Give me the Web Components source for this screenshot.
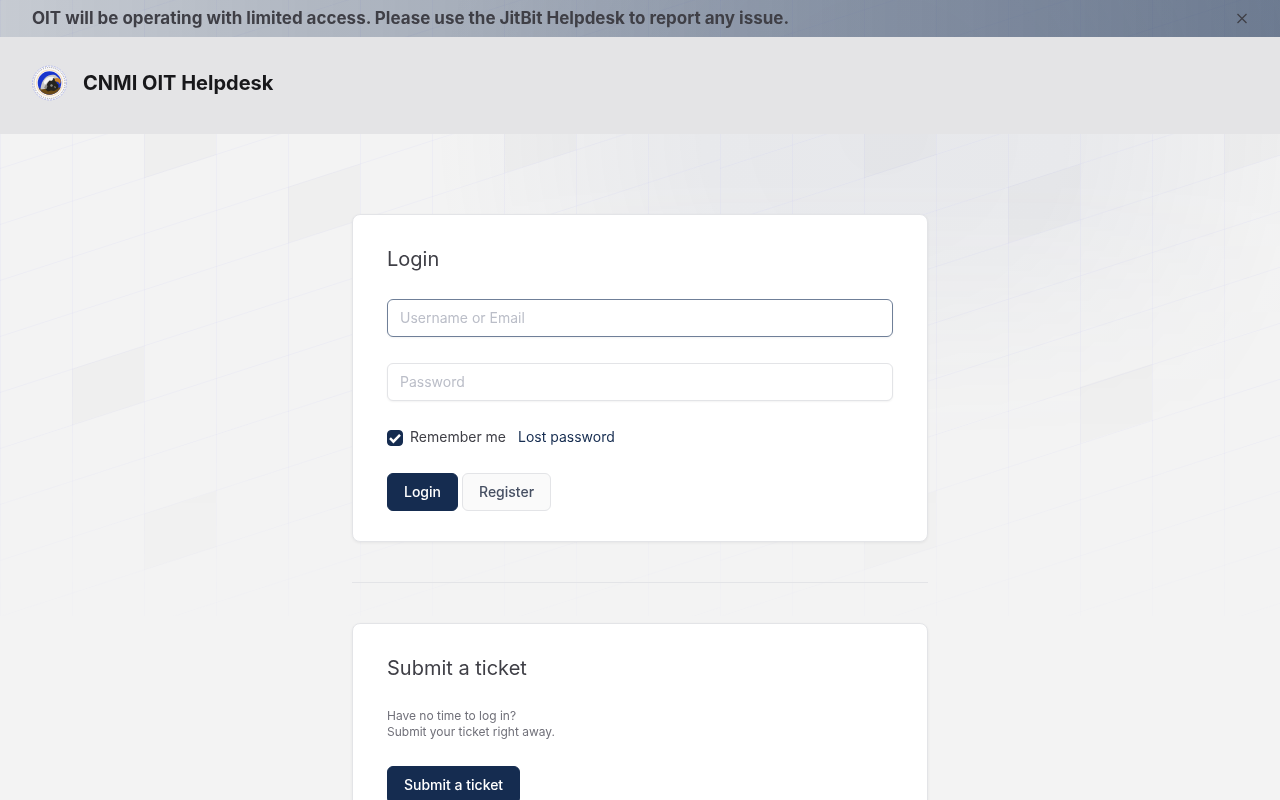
<!DOCTYPE html>
<html lang="en">
<head>
<meta charset="utf-8">
<meta name="viewport" content="width=device-width, initial-scale=1">
<title>CNMI OIT Helpdesk - Login</title>
<style>
  html {
    --navy: #152c50;
    --border: #e3e4e7;
    --text: #3f3f46;
    --muted: #71717a;
    background: #f3f3f3;
  }

  body {
    margin: 0;
    min-height: 100vh;
    color: var(--text);
    font: 14px/20px Inter, "Liberation Sans", sans-serif;
  }

  main {
    box-sizing: border-box;
    max-width: 608px;
    margin: 0 auto;
    padding: 80px 16px;
  }

  hr {
    margin: 40px 0;
    border: 0;
    border-top: 1px solid var(--border);
  }

  form {
    display: flex;
    flex-direction: column;
    gap: 26px;
  }

  .row {
    display: flex;
    align-items: center;
    gap: 12px;
  }

  .buttons {
    display: flex;
    gap: 4px;
  }

  a {
    color: var(--navy);
    text-decoration: none;
  }

  .note {
    margin: 0 0 26px;
    color: var(--muted);
    font-size: 12px;
    line-height: 16px;
  }
</style>
</head>
<body>
<page-backdrop></page-backdrop>
<notice-bar>OIT will be operating with limited access. Please use the JitBit Helpdesk to report any issue.</notice-bar>
<site-header>CNMI OIT Helpdesk</site-header>

<main>
  <panel-card heading="Login">
    <form>
      <text-field name="username" label="Username or Email" active></text-field>
      <text-field name="password" type="password" label="Password"></text-field>
      <div class="row">
        <check-box name="remember" checked>Remember me</check-box>
        <a href="#lost">Lost password</a>
      </div>
      <div class="buttons">
        <action-button primary>Login</action-button>
        <action-button>Register</action-button>
      </div>
    </form>
  </panel-card>
  <hr>
  <panel-card heading="Submit a ticket">
    <p class="note">Have no time to log in?<br>Submit your ticket right away.</p>
    <action-button primary>Submit a ticket</action-button>
  </panel-card>
</main>

<template id="backdrop">
  <style>
    :host {
      display: block;
      position: fixed;
      inset: 0;
      z-index: -1;
      overflow: hidden;
    }
    .glow {
      position: absolute;
      inset: 0;
      background: radial-gradient(circle 450px at 69% 130px, rgba(90, 105, 150, .075), rgba(90, 105, 150, .065) 40%, rgba(90, 105, 150, 0));
      -webkit-mask-image: linear-gradient(#000 180px, transparent 445px);
      mask-image: linear-gradient(#000 180px, transparent 445px);
    }
    svg {
      position: absolute;
      width: 100%;
      height: 700px;
      -webkit-mask-image: linear-gradient(#000 55%, transparent);
      mask-image: linear-gradient(#000 55%, transparent);
    }
  </style>
  <div class="glow"></div>
  <svg aria-hidden="true">
    <defs>
      <pattern id="mesh" width="720" height="616" patternUnits="userSpaceOnUse">
        <g class="cells" fill="#000" fill-opacity=".016"></g>
        <path class="lines" fill="none" stroke="#6464ff" stroke-opacity=".038"/>
      </pattern>
    </defs>
    <rect width="100%" height="616" fill="url(#mesh)"/>
  </svg>
</template>

<template id="notice">
  <style>
    :host {
      display: flex;
      align-items: center;
      justify-content: space-between;
      padding: 6px 32px 7px;
      background: linear-gradient(90deg, rgba(21, 44, 80, .2), rgba(21, 44, 80, .6));
      font-size: 17px;
      font-weight: 700;
      line-height: 24px;
    }
    :host([hidden]) { display: none; }
    button {
      display: flex;
      padding: 0;
      border: 0;
      background: none;
      color: inherit;
      cursor: pointer;
    }
  </style>
  <span><slot></slot></span>
  <button type="button" aria-label="Close">
    <svg width="12" height="12" viewBox="0 0 12 12" fill="none" stroke="currentColor" stroke-width="1.300"><path d="M1.500 2l9 9M10.500 2l-9 9"/></svg>
  </button>
</template>

<template id="header">
  <style>
    :host {
      display: block;
      padding: 28px 32px 33px;
      background: #e4e4e6;
    }
    a {
      display: flex;
      align-items: center;
      gap: 15px;
      color: #18181b;
      font-size: 20px;
      font-weight: 700;
      line-height: 28px;
      text-decoration: none;
    }
  </style>
  <a href="#home">
    <svg width="36" height="36" viewBox="0 0 36 36" aria-hidden="true">
      <circle cx="17.500" cy="18" r="17" fill="#f8f8fa" stroke="#a9b0ea" stroke-width=".8" stroke-dasharray="2 1"/>
      <circle cx="17.500" cy="18" r="15.500" fill="none" stroke="#8a8a92" stroke-width="1" stroke-dasharray=".8 1.200"/>
      <circle cx="17.500" cy="18" r="13" fill="#fff" stroke="#f6dfc0" stroke-width="1.200"/>
      <clipPath id="disc"><circle cx="17.500" cy="18" r="11.800"/></clipPath>
      <g clip-path="url(#disc)">
        <path fill="#1a35cc" d="M5 6h26v24H5z"/>
        <path fill="#6b4a16" d="M5 24l7-1.500h19V31H5z"/>
        <path fill="#c9c8c6" d="M8.500 24.500c.3-5 2-9 4.500-11.500 3-3 7-3.800 10.500-2.800l3.500 3-2.500 3.300-3 3-5 4z"/>
        <path fill="#f6f5f2" d="M11.500 17c2-4.500 6-6 10.500-5l-2 3-4 1.500-3 3.500z"/>
        <path fill="#24231f" d="M15.500 18l2-2.500 2 .5 3-2.500 2 1.500v3l2 2-.5 3.500-4 2.500-3-.5-3 1-2.500-2 .5-3z"/>
        <path fill="#8d8c88" d="M12 23l2-4 1.500 2-1 3zM18 20l2-1 1 2-2 1zM22 21l2 1-1 1.500z"/>
        <path fill="#c9822c" d="M22.500 13.500c2.800-1.200 5.200-.3 6.200 1.800.3 1.500-.2 3-1 4-.5-1.800-1.900-2.800-4.700-3z"/>
        <circle cx="21.500" cy="14" r=".7" fill="#16120e"/>
      </g>
    </svg>
    <slot></slot>
  </a>
</template>

<template id="card">
  <style>
    :host {
      display: block;
      padding: 30px 34px;
      border: 1px solid var(--border);
      border-radius: 8px;
      background: #fff;
      box-shadow: 0 1px 3px rgba(0, 0, 0, .06);
    }
    h2 {
      margin: 0 0 26px;
      font-size: 20px;
      font-weight: 400;
      line-height: 28px;
    }
  </style>
  <h2></h2>
  <slot></slot>
</template>

<template id="field">
  <style>
    :host { display: block; }
    input {
      display: block;
      box-sizing: border-box;
      width: 100%;
      padding: 8px 12px;
      border: 1px solid var(--border);
      border-radius: 6px;
      outline: 0;
      background: #fff;
      box-shadow: 0 1px 2px rgba(0, 0, 0, .05);
      color: var(--text);
      font: 14px/20px Inter, "Liberation Sans", sans-serif;
    }
    input::placeholder { color: #bbbec8; opacity: 1; }
    input:focus, :host([active]) input { border-color: #6f7f98; }
  </style>
  <input>
</template>

<template id="check">
  <style>
    :host { display: block; }
    label {
      display: grid;
      grid-template-columns: 16px auto;
      align-items: end;
      column-gap: 7px;
      cursor: pointer;
    }
    input {
      grid-area: 1 / 1;
      width: 16px;
      height: 16px;
      margin: 0 0 1px;
      border: 1px solid var(--navy);
      border-radius: 4px;
      appearance: none;
      -webkit-appearance: none;
    }
    input:checked { background: var(--navy); }
    svg { grid-area: 1 / 1; margin-bottom: 1px; pointer-events: none; }
    span { grid-area: 1 / 2; }
  </style>
  <label>
    <input type="checkbox">
    <svg width="16" height="16" viewBox="0 0 16 16" fill="none" stroke="#fff" stroke-width="2.500"><path d="M3 8.200l3.400 3.400L13 4.800"/></svg>
    <span><slot></slot></span>
  </label>
</template>

<template id="button">
  <style>
    :host { display: inline-block; vertical-align: top; }
    button {
      display: block;
      padding: 8px 16px;
      border: 1px solid var(--border);
      border-radius: 6px;
      background: #fafafa;
      color: #475063;
      font: 500 14px/20px Inter, "Liberation Sans", sans-serif;
      cursor: pointer;
    }
    :host([primary]) button {
      border-color: var(--navy);
      background: var(--navy);
      color: #fff;
    }
  </style>
  <button type="button"><slot></slot></button>
</template>

<script>
class BaseElement extends HTMLElement {
  constructor(id) {
    super();
    this.attachShadow({ mode: 'open' });
    this.shadowRoot.appendChild(document.getElementById(id).content.cloneNode(true));
  }

  find(selector) {
    return this.shadowRoot.querySelector(selector);
  }
}

class PageBackdrop extends BaseElement {
  constructor() {
    super('backdrop');
    this.drawLines();
    this.drawCells();
  }

  // slanted rows are 56 apart and climb 233 over one 720 wide tile
  drawLines() {
    let d = '';
    for (let x = 0; x < 720; x += 72) {
      d += `M${x + 0.5} 0V616`;
    }
    for (let y = 0; y < 860; y += 56) {
      d += `M0 ${y + 0.5}L720 ${y - 232.5}`;
    }
    this.find('.lines').setAttribute('d', d);
  }

  // column and top left corner of each shaded cell
  drawCells() {
    const cells = [[2, 122], [4, 187], [7, 117], [1, 369], [5, 387], [2, 514]];
    this.find('.cells').innerHTML = cells
      .map(([col, y]) => `<path d="M${col * 72} ${y}l72-23v56l-72 23z"/>`)
      .join('');
  }
}

class NoticeBar extends BaseElement {
  constructor() {
    super('notice');
    this.find('button').addEventListener('click', this.close.bind(this));
  }

  close() {
    this.hidden = true;
  }
}

class SiteHeader extends BaseElement {
  constructor() {
    super('header');
  }
}

class PanelCard extends BaseElement {
  constructor() {
    super('card');
    this.find('h2').textContent = this.getAttribute('heading');
  }
}

class TextField extends BaseElement {
  constructor() {
    super('field');
    const input = this.find('input');
    const label = this.getAttribute('label');
    input.type = this.getAttribute('type') || 'text';
    input.name = this.getAttribute('name');
    input.placeholder = label;
    input.setAttribute('aria-label', label);
  }
}

class CheckBox extends BaseElement {
  constructor() {
    super('check');
    this.find('input').name = this.getAttribute('name');
    this.find('input').checked = this.hasAttribute('checked');
  }
}

class ActionButton extends BaseElement {
  constructor() {
    super('button');
  }
}

customElements.define('page-backdrop', PageBackdrop);
customElements.define('notice-bar', NoticeBar);
customElements.define('site-header', SiteHeader);
customElements.define('panel-card', PanelCard);
customElements.define('text-field', TextField);
customElements.define('check-box', CheckBox);
customElements.define('action-button', ActionButton);
</script>
</body>
</html>
